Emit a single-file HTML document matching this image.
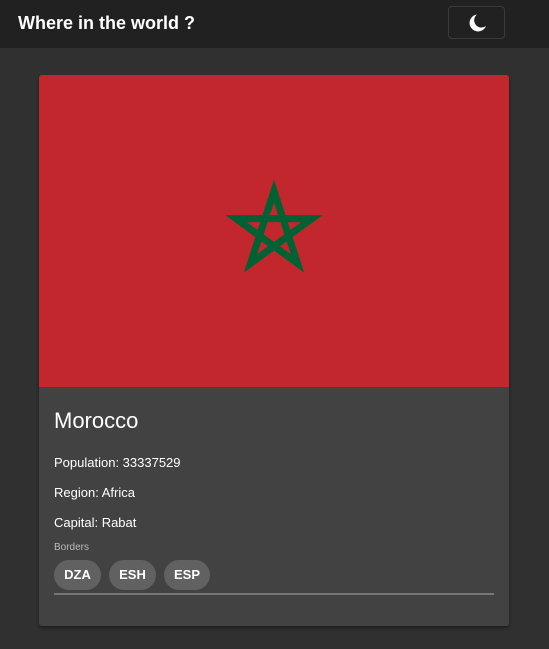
<!DOCTYPE html>
<html><head><style>
body{margin:0;width:549px;height:649px;background:#303030;font-family:"Liberation Sans",Arial,sans-serif;color:#fff;overflow:hidden;position:relative}
.hdr{position:absolute;left:0;top:0;width:549px;height:48px;background:#212121}
.hdr h1{position:absolute;left:18px;top:12px;margin:0;font-size:18px;font-weight:bold;line-height:22px}
.btn{position:absolute;left:448px;top:6px;width:55px;height:31px;border:1px solid #3a3a3a;border-radius:4px}
.card{position:absolute;left:39px;top:75px;width:470px;height:551px;background:#424242;border-radius:3px;overflow:hidden;box-shadow:0 2px 3px rgba(0,0,0,.4)}
.flag{position:absolute;left:0;top:0;width:470px;height:312px;background:#c1272d}
.t{position:absolute;left:15px;margin:0}
.chip{position:absolute;top:485px;height:30px;border-radius:15px;background:#616161;font-weight:bold;font-size:13px;line-height:30px;text-align:center}
</style></head><body>
<div class="hdr"><h1>Where in the world ?</h1>
<div class="btn"><svg width="55" height="31" viewBox="0 0 55 31"><path d="M28 7.5 A8.5 8.5 0 1 0 37 19 A6.5 6.5 0 0 1 28 7.5Z" fill="#fff"/></svg></div></div>
<div class="card">
<div class="flag"><svg width="470" height="312"><polygon points="235,116 258.5,188.4 197,143.6 273,143.6 211.5,188.4" fill="none" stroke="#006233" stroke-width="7" stroke-linejoin="miter" stroke-miterlimit="10"/></svg></div>
<div class="t" style="top:333px;font-size:22px">Morocco</div>
<div class="t" style="top:380px;font-size:13px">Population: 33337529</div>
<div class="t" style="top:410px;font-size:13px">Region: Africa</div>
<div class="t" style="top:440px;font-size:13px">Capital: Rabat</div>
<div class="t" style="top:467px;font-size:10px;color:#bbb">Borders</div>
<div class="chip" style="left:15px;width:47px">DZA</div>
<div class="chip" style="left:70px;width:47px">ESH</div>
<div class="chip" style="left:125px;width:46px">ESP</div>
<div style="position:absolute;left:15px;top:518px;width:440px;height:2px;background:#777"></div>
</div>
</body></html>
